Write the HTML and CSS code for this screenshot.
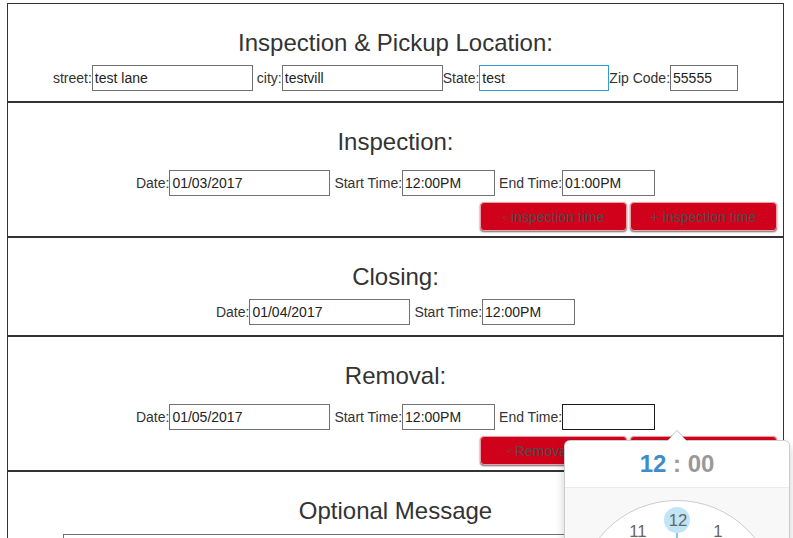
FILE: index.html
```html
<!DOCTYPE html>
<html>
<head>
<meta charset="utf-8">
<title>Schedule</title>
<link rel="stylesheet" href="styles.css">
</head>
<body>
<div class="form">
  <section class="sec">
    <h3 class="title">Inspection &amp; Pickup Location:</h3>
    <div class="row">
      <span class="lbl">street:</span><input class="in w-lg sp" value="test lane"><span class="lbl">city:</span><input class="in w-lg" value="testvill"><span class="lbl">State:</span><input class="in w-md focus" value="test"><span class="lbl">Zip Code:</span><input class="in w-sm" value="55555">
    </div>
  </section>

  <section class="sec sec-btns">
    <h3 class="title">Inspection:</h3>
    <div class="row row-gap">
      <span class="lbl">Date:</span><input class="in w-lg sp" value="01/03/2017"><span class="lbl">Start Time:</span><input class="in w-time sp" value="12:00PM"><span class="lbl">End Time:</span><input class="in w-time" value="01:00PM">
    </div>
    <div class="btns">
      <button class="btn" type="button">- inspection time</button>
      <button class="btn" type="button">+ inspection time</button>
    </div>
  </section>

  <section class="sec">
    <h3 class="title">Closing:</h3>
    <div class="row">
      <span class="lbl">Date:</span><input class="in w-lg sp" value="01/04/2017"><span class="lbl">Start Time:</span><input class="in w-time" value="12:00PM">
    </div>
  </section>

  <section class="sec sec-btns">
    <h3 class="title">Removal:</h3>
    <div class="row row-gap">
      <span class="lbl">Date:</span><input class="in w-lg sp" value="01/05/2017"><span class="lbl">Start Time:</span><input class="in w-time sp" value="12:00PM"><span class="lbl">End Time:</span><input class="in w-time active" value="">
    </div>
    <div class="btns">
      <button class="btn" type="button">- Removal time</button>
      <button class="btn" type="button">+ Removal time</button>
    </div>
  </section>

  <section class="sec">
    <h3 class="title">Optional Message</h3>
    <textarea class="msg"></textarea>
  </section>
</div>

<div class="popover">
  <div class="popover-arrow"></div>
  <div class="popover-title"><span class="hours">12</span> : <span class="minutes">00</span></div>
  <div class="popover-content">
    <div class="plate">
      <svg class="canvas" width="200" height="200" viewBox="0 0 200 200">
        <line x1="100" y1="100" x2="100" y2="33" stroke="#0095dd" stroke-width="1"/>
        <circle cx="100" cy="20" r="13" fill="#c0e5f7"/>
        <circle cx="100" cy="100" r="2" fill="#0095dd"/>
      </svg>
      <div class="tick" style="left:87px;top:7px">12</div>
      <div class="tick" style="left:127px;top:17.72px">1</div>
      <div class="tick" style="left:156.28px;top:47px">2</div>
      <div class="tick" style="left:167px;top:87px">3</div>
      <div class="tick" style="left:156.28px;top:127px">4</div>
      <div class="tick" style="left:127px;top:156.28px">5</div>
      <div class="tick" style="left:87px;top:167px">6</div>
      <div class="tick" style="left:47px;top:156.28px">7</div>
      <div class="tick" style="left:17.72px;top:127px">8</div>
      <div class="tick" style="left:7px;top:87px">9</div>
      <div class="tick" style="left:17.72px;top:47px">10</div>
      <div class="tick" style="left:47px;top:17.72px">11</div>
    </div>
  </div>
</div>
</body>
</html>
```

FILE: styles.css
```css
html {
  overflow: hidden;
}
body {
  margin: 0;
  background: #fff;
  font-family: "Liberation Sans", Arial, sans-serif;
  color: #333;
  font-size: 14px;
}
.form {
  margin: 3px 9px 0 7px;
}
.sec {
  border: 1px solid #333;
  padding: 25px 0 10px;
  text-align: center;
}
.sec-btns {
  padding-bottom: 5px;
}
.title {
  margin: 0;
  font-size: 24px;
  line-height: 28px;
  font-weight: normal;
  color: #333;
}
.row {
  display: flex;
  justify-content: center;
  align-items: center;
  height: 26px;
  margin-top: 8px;
}
.row-gap {
  margin-top: 14px;
}
.lbl {
  white-space: nowrap;
  font-size: 14px;
  color: #333;
}
.in {
  box-sizing: border-box;
  height: 26px;
  border: 1px solid #707070;
  padding: 0 2px;
  margin: 0;
  font-family: "Liberation Sans", Arial, sans-serif;
  font-size: 14px;
  color: #222;
  background: #fff;
  outline: none;
  border-radius: 0;
}
.sp {
  margin-right: 4px;
}
.w-lg { width: 161px; }
.w-md { width: 130px; }
.w-sm { width: 68px; }
.w-time { width: 93px; }
.focus { border-color: #2d9ddb; }
.active { border-color: #1a1a1a; }
.btns {
  display: flex;
  justify-content: flex-end;
  gap: 3px;
  margin-top: 6px;
  padding-right: 6px;
}
.btn {
  box-sizing: border-box;
  width: 147px;
  height: 29px;
  margin: 0;
  padding: 0;
  border: 1px solid #e8a0a8;
  border-radius: 4px;
  background: #d0021b;
  color: #4d4d4d;
  font-family: "Liberation Sans", Arial, sans-serif;
  font-size: 14px;
  box-shadow: 0 1px 2px rgba(0,0,0,.6);
}
.msg {
  display: block;
  box-sizing: border-box;
  width: 665px;
  height: 90px;
  margin: 9px auto 0;
  border: 1px solid #707070;
  resize: none;
}
.popover {
  position: absolute;
  left: 564px;
  top: 440px;
  width: 224px;
  border: 1px solid rgba(0,0,0,.2);
  border-radius: 6px;
  background: #fff;
  box-shadow: 0 5px 10px rgba(0,0,0,.2);
  font-family: "Liberation Sans", Arial, sans-serif;
  font-size: 14px;
}
.popover-arrow {
  position: absolute;
  top: -11px;
  left: 50%;
  margin-left: -11px;
  width: 0;
  height: 0;
  border: 11px solid transparent;
  border-top-width: 0;
  border-bottom-color: rgba(0,0,0,.25);
}
.popover-arrow::after {
  content: "";
  position: absolute;
  top: 1px;
  left: -10px;
  width: 0;
  height: 0;
  border: 10px solid transparent;
  border-top-width: 0;
  border-bottom-color: #fff;
}
.popover-title {
  padding: 8px 14px;
  line-height: 30px;
  font-size: 24px;
  font-weight: bold;
  color: #999;
  text-align: center;
  border-bottom: 1px solid #ebebeb;
  border-radius: 5px 5px 0 0;
  background: #fff;
}
.hours {
  color: #428bca;
}
.popover-content {
  background: #f8f8f8;
  padding: 12px;
  border-radius: 0 0 5px 5px;
}
.plate {
  position: relative;
  box-sizing: border-box;
  width: 200px;
  height: 200px;
  background: #fff;
  border: 1px solid #ccc;
  border-radius: 50%;
}
.canvas {
  position: absolute;
  top: -1px;
  left: -1px;
}
.tick {
  position: absolute;
  width: 26px;
  height: 26px;
  line-height: 26px;
  border-radius: 50%;
  text-align: center;
  color: #666;
  font-size: 16.8px;
}
```
